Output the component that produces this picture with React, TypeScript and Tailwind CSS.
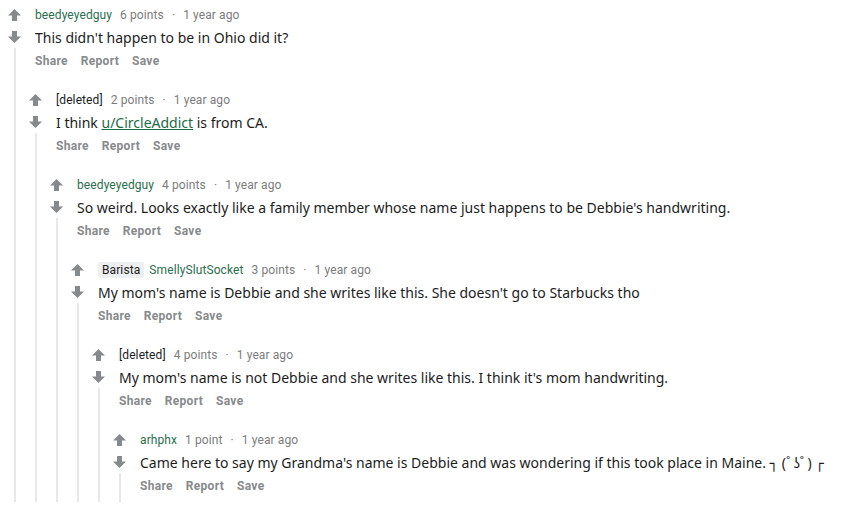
import React from "react";

type C = {
  author: string;
  deleted?: boolean;
  flair?: string;
  points: string;
  time: string;
  body: React.ReactNode;
  children?: React.ReactNode;
};

const Up = () => (
  <svg width="13" height="12" viewBox="0 0 13 12" className="block">
    <path d="M6.5 0 L13 6.5 H9 V12 H4 V6.5 H0 Z" fill="#878a8c" />
  </svg>
);
const Down = () => (
  <svg width="13" height="12" viewBox="0 0 13 12" className="block">
    <path d="M6.5 12 L13 5.5 H9 V0 H4 V5.5 H0 Z" fill="#878a8c" />
  </svg>
);

const head = { fontFamily: "Roboto, 'Noto Sans', sans-serif" };
const bodyFont = { fontFamily: "'Noto Sans', 'DejaVu Sans', sans-serif" };

function Comment({ author, deleted, flair, points, time, body, children }: C) {
  return (
    <div className="flex">
      <div className="w-[21px] flex flex-col items-center pt-[9px] shrink-0">
        <Up />
        <div className="h-[10px]" />
        <Down />
        <div className="mt-[5px] w-[2px] flex-1 bg-[#e6e8ea]" />
      </div>
      <div className="flex-1 min-w-0">
        <div className="pl-[10px] pt-[7px] pb-[8px]">
          <div className="flex items-center h-[16px] text-[12px] leading-[16px] tracking-[0.1px]" style={head}>
            {flair && (
              <span className="bg-[#edeff1] text-[#1c1c1c] px-[4px] mr-[5px] rounded-[2px] leading-[16px]">
                {flair}
              </span>
            )}
            <span className={deleted ? "text-[#1c1c1c]" : "text-[#2a6e4d]"}>{author}</span>
            <span className="text-[#7c7c7c] ml-[8px]">{points}</span>
            <span className="text-[#7c7c7c] mx-[8px]">·</span>
            <span className="text-[#7c7c7c]">{time}</span>
          </div>
          <div className="mt-[4px] text-[14px] leading-[21px] text-[#1c1c1c] whitespace-nowrap" style={bodyFont}>
            {body}
          </div>
          <div className="mt-[5px] flex gap-[13px] h-[16px] text-[12px] leading-[16px] font-bold tracking-[0.3px] text-[#878a8c]" style={head}>
            <span>Share</span>
            <span>Report</span>
            <span>Save</span>
          </div>
        </div>
        {children && <div className="mt-[8px]">{children}</div>}
      </div>
    </div>
  );
}

export default function App() {
  return (
    <div className="w-[852px] h-[526px] bg-white overflow-hidden pl-[4px]">
      <Comment
        author="beedyeyedguy"
        points="6 points"
        time="1 year ago"
        body="This didn't happen to be in Ohio did it?"
      >
        <Comment
          author="[deleted]"
          deleted
          points="2 points"
          time="1 year ago"
          body={
            <>
              I think <span className="text-[#1d6b45] underline">u/CircleAddict</span> is from CA.
            </>
          }
        >
          <Comment
            author="beedyeyedguy"
            points="4 points"
            time="1 year ago"
            body="So weird. Looks exactly like a family member whose name just happens to be Debbie's handwriting."
          >
            <Comment
              author="SmellySlutSocket"
              flair="Barista"
              points="3 points"
              time="1 year ago"
              body="My mom's name is Debbie and she writes like this. She doesn't go to Starbucks tho"
            >
              <Comment
                author="[deleted]"
                deleted
                points="4 points"
                time="1 year ago"
                body="My mom's name is not Debbie and she writes like this. I think it's mom handwriting."
              >
                <Comment
                  author="arhphx"
                  points="1 point"
                  time="1 year ago"
                  body="Came here to say my Grandma's name is Debbie and was wondering if this took place in Maine. ┐ (˚ ʖ˚ ) ┌"
                />
              </Comment>
            </Comment>
          </Comment>
        </Comment>
      </Comment>
    </div>
  );
}
